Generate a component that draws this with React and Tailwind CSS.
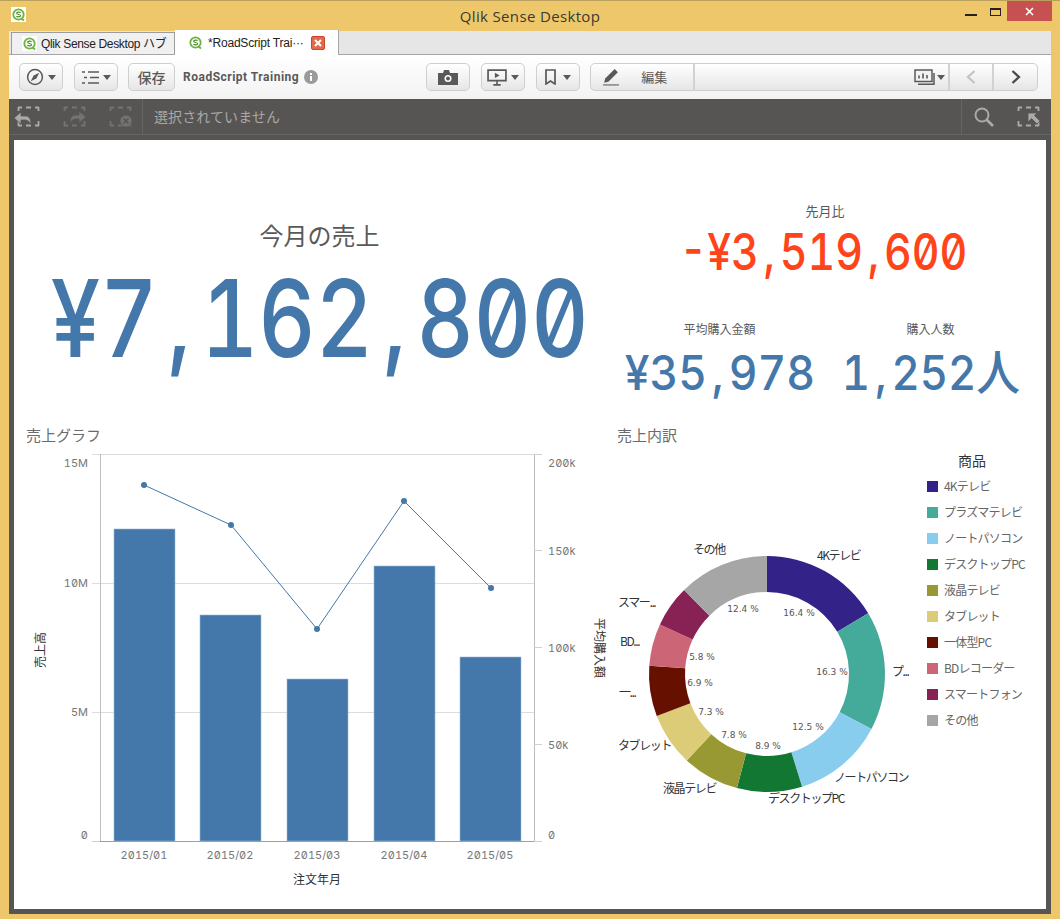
import React from "react";

const bars = [
  { x: 114, top: 529, label: "2015/01" },
  { x: 200, top: 615, label: "2015/02" },
  { x: 287, top: 679, label: "2015/03" },
  { x: 374, top: 566, label: "2015/04" },
  { x: 460, top: 657, label: "2015/05" },
];
const points = [[144, 485], [231, 525], [317, 629], [404, 501], [491, 588]];

const slices = [
  { name: "4Kテレビ", value: 16.4, color: "#332288" },
  { name: "プラズマテレビ", value: 16.3, color: "#44aa99" },
  { name: "ノートパソコン", value: 12.5, color: "#88ccee" },
  { name: "デスクトップPC", value: 8.9, color: "#117733" },
  { name: "液晶テレビ", value: 7.8, color: "#999933" },
  { name: "タブレット", value: 7.3, color: "#ddcc77" },
  { name: "一体型PC", value: 6.9, color: "#661100" },
  { name: "BDレコーダー", value: 5.8, color: "#cc6677" },
  { name: "スマートフォン", value: 5.7, color: "#882255" },
  { name: "その他", value: 12.4, color: "#a6a6a6" },
];

const outerLabels = [
  ["4Kテレビ", 817, 560], ["プ...", 892, 676], ["ノートパソコン", 834, 782], ["デスクトップPC", 768, 803],
  ["液晶テレビ", 663, 793], ["タブレット", 618, 750], ["一...", 619, 697], ["BD...", 620, 646],
  ["スマー...", 618, 607], ["その他", 693, 554],
];
const innerLabels = [
  ["16.4 %", 799, 613], ["16.3 %", 832, 672], ["12.5 %", 808, 727], ["8.9 %", 768, 746], ["7.8 %", 734, 735],
  ["7.3 %", 711, 712], ["6.9 %", 700, 683], ["5.8 %", 702, 657], ["12.4 %", 743, 609],
];

const arcPath = (start, end) => {
  const cx = 767, cy = 674, R = 118, r = 82;
  const pt = (rad, pct) => {
    const a = (pct / 100) * Math.PI * 2;
    return `${(cx + rad * Math.sin(a)).toFixed(2)} ${(cy - rad * Math.cos(a)).toFixed(2)}`;
  };
  const large = end - start > 50 ? 1 : 0;
  return `M${pt(R, start)} A${R} ${R} 0 ${large} 1 ${pt(R, end)} L${pt(r, end)} A${r} ${r} 0 ${large} 0 ${pt(r, start)} Z`;
};

const QlikLogo = ({ bg = "#fff" }) => (
  <svg width="15" height="15" viewBox="0 0 15 15" className="shrink-0">
    <rect width="15" height="15" fill={bg} />
    <circle cx="7.5" cy="7.5" r="5.2" fill="none" stroke="#6cb33f" strokeWidth="1.8" />
    <path d="M10.5 11.5 L13 13.5" stroke="#6cb33f" strokeWidth="1.8" />
    <path d="M9.6 5.8 C9 4.9 5.6 4.8 5.6 6.3 C5.6 8 9.6 7 9.6 8.8 C9.6 10.2 6.2 10.1 5.4 9.2" fill="none" stroke="#4d8f2a" strokeWidth="1.1" />
  </svg>
);

const Caret = () => (
  <svg width="8" height="5" viewBox="0 0 8 5"><path d="M0 0H8L4 5Z" fill="#595959" /></svg>
);

const ToolButton = ({ className, children }) => (
  <div className={`h-[28px] flex items-center justify-center gap-[4px] rounded-[5px] border border-[#cfcfcf] bg-gradient-to-b from-white to-[#e6e6e6] ${className}`}>
    {children}
  </div>
);

// commas sit in a mono-width cell like the sheet's number font
const Num = ({ value }) =>
  value.split(/(,)/).map((part, i) =>
    part === "," ? <span key={i} className="px-[0.11em]">,</span> : <span key={i}>{part}</span>
  );

const Kpi = ({ label, value, labelClass, valueClass }) => (
  <div className="flex flex-col items-center">
    <div className={labelClass}>{label}</div>
    <div className={valueClass}><Num value={value} /></div>
  </div>
);

const TitleBar = () => (
  <div className="h-[31px] shrink-0 grid grid-cols-3 px-[8px] border-t border-[#b9a05c]">
    <div className="pt-[6px] pl-[3px]"><QlikLogo /></div>
    <div className="text-center text-[15px] leading-[30px] tracking-[0.35px] text-[#3a3a30] whitespace-nowrap font-['Open_Sans',sans-serif]">Qlik Sense Desktop</div>
    <div className="flex justify-end items-start">
      <div className="w-[12px] h-[2px] mt-[13px] mr-[13px] bg-[#222]" />
      <div className="w-[11px] h-[8px] mt-[7px] mr-[6px] border border-[#222] border-t-2" />
      <div className="w-[45px] h-[20px] bg-[#c75050] flex items-center justify-center">
        <svg width="9" height="9" viewBox="0 0 9 9"><path d="M1 1L8 8M8 1L1 8" stroke="#fff" strokeWidth="1.6" /></svg>
      </div>
    </div>
  </div>
);

const Tabs = () => (
  <div className="h-[24px] shrink-0 flex items-end bg-[#e6e6e6] border-b border-[#a6a6a6] pl-[2px] text-[12px] text-[#222] font-['Liberation_Sans','Noto_Sans_CJK_JP',sans-serif]">
    <div className="w-[164px] h-[22px] flex items-center gap-[4px] pl-[10px] bg-[#f0f0f0] border border-[#9c9c9c] border-b-0 whitespace-nowrap">
      <QlikLogo />
      <span className="tracking-[-0.35px]">Qlik Sense Desktop ハブ</span>
    </div>
    <div className="w-[164px] h-[25px] -mb-px flex items-center pl-[13px] pr-[13px] bg-white border-r border-[#a6a6a6] whitespace-nowrap">
      <QlikLogo />
      <span className="ml-[5px] tracking-[-0.2px]">*RoadScript Trai···</span>
      <span className="ml-auto w-[14px] h-[14px] flex items-center justify-center rounded-[2px] bg-[#e2694a] border border-[#c8452a]">
        <svg width="8" height="8" viewBox="0 0 8 8"><path d="M1 1L7 7M7 1L1 7" stroke="#fff" strokeWidth="2" /></svg>
      </span>
    </div>
  </div>
);

const Toolbar = () => (
  <div className="h-[44px] shrink-0 flex items-center pl-[10px] bg-gradient-to-b from-white to-[#f3f3f3] text-[#595959]">
    <ToolButton className="w-[44px]">
      <svg width="18" height="18" viewBox="0 0 17 17">
        <circle cx="8.5" cy="8.5" r="7" fill="none" stroke="#595959" strokeWidth="1.4" />
        <path d="M12.5 4.5L9.8 9.8L4.5 12.5L7.2 7.2Z" fill="#595959" />
      </svg>
      <Caret />
    </ToolButton>
    <ToolButton className="w-[44px] ml-[11px]">
      <svg width="17" height="13" viewBox="0 0 17 13"><path d="M0 1H3M6 1H17M2 6.500H5M8 6.500H17M0 12H3M6 12H17" stroke="#595959" strokeWidth="1.6" /></svg>
      <Caret />
    </ToolButton>
    <ToolButton className="w-[47px] ml-[10px] text-[14px] font-medium">保存</ToolButton>
    <div className="ml-[8px] text-[12px] font-bold font-['Roboto',sans-serif] tracking-[0.5px]">RoadScript Training</div>
    <svg width="14" height="14" viewBox="0 0 14 14" className="ml-[5px]">
      <circle cx="7" cy="7" r="7" fill="#9a9a9a" />
      <rect x="6" y="6" width="2" height="5" fill="#fff" />
      <rect x="6" y="3" width="2" height="2" fill="#fff" />
    </svg>
    <ToolButton className="w-[44px] ml-[108px]">
      <svg width="20" height="15" viewBox="0 0 20 15">
        <path d="M0 3H5L6 0H11L12 3H20V15H0Z" fill="#595959" />
        <circle cx="10" cy="8.500" r="3.500" fill="#fff" />
        <circle cx="10" cy="8.500" r="2" fill="#595959" />
      </svg>
    </ToolButton>
    <ToolButton className="w-[44px] ml-[11px]">
      <svg width="20" height="17" viewBox="0 0 19 16">
        <path d="M1 1H18V11H1Z" fill="none" stroke="#595959" strokeWidth="1.6" />
        <path d="M7.500 3.500L12 6L7.500 8.500Z" fill="#595959" />
        <path d="M9.500 11V15M6 15H13" stroke="#595959" strokeWidth="1.5" />
      </svg>
      <Caret />
    </ToolButton>
    <ToolButton className="w-[44px] ml-[11px]">
      <svg width="11" height="16" viewBox="0 0 11 16"><path d="M1 1H10V15L5.500 12L1 15Z" fill="none" stroke="#595959" strokeWidth="1.7" /></svg>
      <span className="ml-[3px]"><Caret /></span>
    </ToolButton>
    <div className="h-[28px] w-[448px] ml-[10px] flex rounded-[5px] border border-[#cfcfcf] bg-gradient-to-b from-white to-[#e6e6e6]">
      <div className="w-[104px] flex items-center pl-[11px] border-r-2 border-[#d2d2d2]">
        <svg width="18" height="18" viewBox="0 0 17 17">
          <path d="M12 1L15 4L6 13L2 14L3 10Z" fill="#595959" />
          <path d="M1 16H16" stroke="#595959" strokeWidth="1" />
        </svg>
        <span className="ml-[21px] text-[13px]">編集</span>
      </div>
      <div className="flex-1 flex items-center justify-end gap-[2px] pr-[3px] border-r-2 border-[#d2d2d2]">
        <svg width="21" height="16" viewBox="0 0 21 16">
          <path d="M4 15.200H20V4" fill="none" stroke="#595959" strokeWidth="1.5" />
          <rect x="1" y="1" width="17" height="11.500" fill="#f2f2f2" stroke="#595959" strokeWidth="1.5" />
          <path d="M5 9.500V6.500M9 9.500V4.500M13 9.500V6" stroke="#595959" strokeWidth="1.6" />
        </svg>
        <Caret />
      </div>
      <div className="w-[44px] flex items-center justify-center border-r-2 border-[#d2d2d2]">
        <svg width="10" height="14" viewBox="0 0 10 14"><path d="M8.500 1L2 7L8.500 13" fill="none" stroke="#c4c4c4" strokeWidth="2.300" /></svg>
      </div>
      <div className="w-[43px] flex items-center justify-center">
        <svg width="10" height="14" viewBox="0 0 10 14"><path d="M1.500 1L8 7L1.500 13" fill="none" stroke="#4a4a4a" strokeWidth="2.300" /></svg>
      </div>
    </div>
  </div>
);

const SelectFrame = ({ stroke, children }) => (
  <svg width="26" height="21" viewBox="0 0 26 21">
    <path d="M4 1.500H8M12 1.500H17M21 1.500H25M4 19.500H8M12 19.500H17M21 19.500H25M4.500 1V5M4.500 15V20M24.500 1V5M24.500 15V20" fill="none" stroke={stroke} strokeWidth="1.800" />
    {children}
  </svg>
);

const SelectionBar = () => (
  <div className="h-[36px] shrink-0 flex items-center bg-[#575553] border-b border-[#666462] text-[#a8a8a8]">
    <div className="w-[134px] h-full flex items-center gap-[20px] pl-[5px] border-r border-[#666462]">
      <SelectFrame stroke="#aaa">
        <path d="M0 12L7 6V10H12C15 10 17 13 17 18C15 15 13 14 11 14H7V18Z" fill="#aaa" stroke="#575553" strokeWidth="0.800" />
      </SelectFrame>
      <SelectFrame stroke="#757371">
        <path d="M26 11L19 5V9H15C12 9 10 12 10 17C12 14 14 13 16 13H19V17Z" fill="#757371" stroke="#575553" strokeWidth="0.800" />
      </SelectFrame>
      <SelectFrame stroke="#757371">
        <circle cx="20" cy="15" r="6" fill="#757371" stroke="#575553" strokeWidth="0.800" />
        <path d="M17.500 12.500L22.500 17.500M22.500 12.500L17.500 17.500" stroke="#575553" strokeWidth="1.500" />
      </SelectFrame>
    </div>
    <div className="flex-1 pl-[11px] text-[14px] tracking-[0.1px]">選択されていません</div>
    <div className="w-[90px] h-full flex items-center gap-[20px] pl-[12px] border-l border-[#666462]">
      <svg width="20" height="20" viewBox="0 0 20 20">
        <circle cx="8" cy="8" r="6.500" fill="none" stroke="#aaa" strokeWidth="2" />
        <path d="M12.500 12.500L19 19" stroke="#aaa" strokeWidth="2.600" />
      </svg>
      <SelectFrame stroke="#aaa">
        <path d="M14 7H23L20.500 9.500L26 15L23 18L17.500 12.500L14 16Z" fill="#aaa" stroke="#575553" strokeWidth="0.800" />
      </SelectFrame>
    </div>
  </div>
);

const monoText = "font-['Inter',sans-serif] slashed-zero tabular-nums text-[11px] fill-[#777]";

const SalesChart = () => (
  <svg width="592" height="463" viewBox="14 446 592 463" className="overflow-visible">
    {[454, 583, 712].map((y) => <path key={y} d={`M92 ${y + 0.5}H534`} stroke="#dcdcdc" />)}
    <path d="M100.500 454V841M534.500 454V841" stroke="#bdbdbd" />
    <path d="M534 454.500H542M534 550.500H542M534 647.500H542M534 744.500H542M534 841.500H542M92 841.500H100" stroke="#cfcfcf" />
    {bars.map((b) => <rect key={b.x} x={b.x} y={b.top} width="61" height={841 - b.top} fill="#4477aa" stroke="#9db9d4" strokeWidth="0.6" />)}
    <path d="M100 841.500H534" stroke="#a0a0a0" />
    <polyline points={points.map((p) => p.join(",")).join(" ")} fill="none" stroke="#4477aa" strokeWidth="1" />
    {points.map((p) => <circle key={p[0]} cx={p[0]} cy={p[1]} r="3" fill="#4477aa" />)}
    {[["15M", 467], ["10M", 587], ["5M", 716], ["0", 839]].map(([t, y]) => (
      <text key={t} x="88" y={y} textAnchor="end" className={monoText}>{t}</text>
    ))}
    {[["200k", 467], ["150k", 555], ["100k", 652], ["50k", 749], ["0", 839]].map(([t, y]) => (
      <text key={t} x="548" y={y} className={monoText}>{t}</text>
    ))}
    {bars.map((b) => <text key={b.label} x={b.x + 30} y="859" textAnchor="middle" className={monoText}>{b.label}</text>)}
    <text x="317" y="884" textAnchor="middle" className="text-[12px] fill-[#333]">注文年月</text>
    <text x="0" y="0" textAnchor="middle" transform="translate(45 650) rotate(-90)" className="text-[12px] fill-[#333]">売上高</text>
    <text x="0" y="0" textAnchor="middle" transform="translate(595 648) rotate(90)" className="text-[12px] fill-[#333]">平均購入額</text>
  </svg>
);

const Donut = () => {
  let acc = 0;
  return (
    <svg width="320" height="463" viewBox="606 446 320 463" className="shrink-0">
      {slices.map((s) => {
        const start = acc;
        acc += s.value;
        return <path key={s.name} d={arcPath(start, acc)} fill={s.color} />;
      })}
      {outerLabels.map(([t, x, y]) => <text key={t} x={x} y={y} className="text-[12px] tracking-[-1.4px] fill-[#333]">{t}</text>)}
      {innerLabels.map(([t, x, y]) => (
        <text key={t} x={x} y={y + 3} textAnchor="middle" className="font-['DejaVu_Sans',sans-serif] text-[9px] fill-[#555]">{t}</text>
      ))}
    </svg>
  );
};

const Legend = () => (
  <div className="flex-1 pt-[4px]">
    <div className="text-center text-[14px] leading-[20px] text-[#333] pr-[28px] mb-[3px]">商品</div>
    <div className="flex flex-col">
      {slices.map((s) => (
        <div key={s.name} className="h-[26px] flex items-center gap-[6px] pl-[1px] text-[12px] tracking-[-0.8px] text-[#666] whitespace-nowrap">
          <span className="w-[11px] h-[11px] shrink-0" style={{ backgroundColor: s.color }} />
          {s.name}
        </div>
      ))}
    </div>
  </div>
);

export default function App() {
  return (
    <div className="w-[1060px] h-[919px] overflow-hidden flex flex-col px-[9px] bg-[#efc76b] font-['Noto_Sans_CJK_JP','Noto_Sans',sans-serif]">
      <div className="-mx-[9px]"><TitleBar /></div>
      <Tabs />
      <Toolbar />
      <SelectionBar />
      <div className="h-[779px] shrink-0 bg-[#575553] px-[5px] pt-[5px] pb-[5px]">
        <div className="h-full bg-white flex flex-col">
          <div className="h-[278px] shrink-0 flex">
            <div className="w-[600px] pl-[11px] pt-[79px] flex flex-col items-center">
              <div className="text-[24px] leading-[32px] text-[#595959]">今月の売上</div>
              <div className="mt-[12px] text-[107px] leading-[110px] font-medium text-[#4477aa] scale-x-[0.828] whitespace-nowrap slashed-zero tabular-nums font-['Inter',sans-serif]"><Num value="¥7,162,800" /></div>
            </div>
            <div className="w-[422px] pt-[62px] flex flex-col items-center">
              <Kpi
                label="先月比"
                value="-¥3,519,600"
                labelClass="text-[13px] leading-[18px] text-[#595959]"
                valueClass="text-[51px] leading-[54px] mt-[5px] -ml-[3px] font-medium text-[#ff441a] scale-x-[0.84] whitespace-nowrap slashed-zero tabular-nums font-['Inter',sans-serif]"
              />
              <div className="w-full grid grid-cols-2 mt-[41px]">
                <Kpi
                  label="平均購入金額"
                  value="¥35,978"
                  labelClass="text-[12px] leading-[18px] text-[#595959]"
                  valueClass="text-[48px] leading-[52px] mt-[9px] font-medium text-[#4477aa] scale-x-[0.925] whitespace-nowrap slashed-zero tabular-nums font-['Inter',sans-serif]"
                />
                <Kpi
                  label="購入人数"
                  value="1,252人"
                  labelClass="text-[12px] leading-[18px] text-[#595959]"
                  valueClass="text-[48px] leading-[52px] mt-[9px] font-medium text-[#4477aa] scale-x-[0.91] whitespace-nowrap slashed-zero tabular-nums font-['Inter','Noto_Sans_CJK_JP',sans-serif]"
                />
              </div>
            </div>
          </div>
          <div className="flex-1 flex min-h-0">
            <div className="w-[592px] shrink-0">
              <div className="h-[28px] pl-[12px] text-[15px] leading-[34px] text-[#6b6b6b]">売上グラフ</div>
              <SalesChart />
            </div>
            <div className="flex-1">
              <div className="h-[28px] pl-[11px] text-[15px] leading-[34px] text-[#6b6b6b]">売上内訳</div>
              <div className="flex">
                <Donut />
                <Legend />
              </div>
            </div>
          </div>
        </div>
      </div>
    </div>
  );
}
